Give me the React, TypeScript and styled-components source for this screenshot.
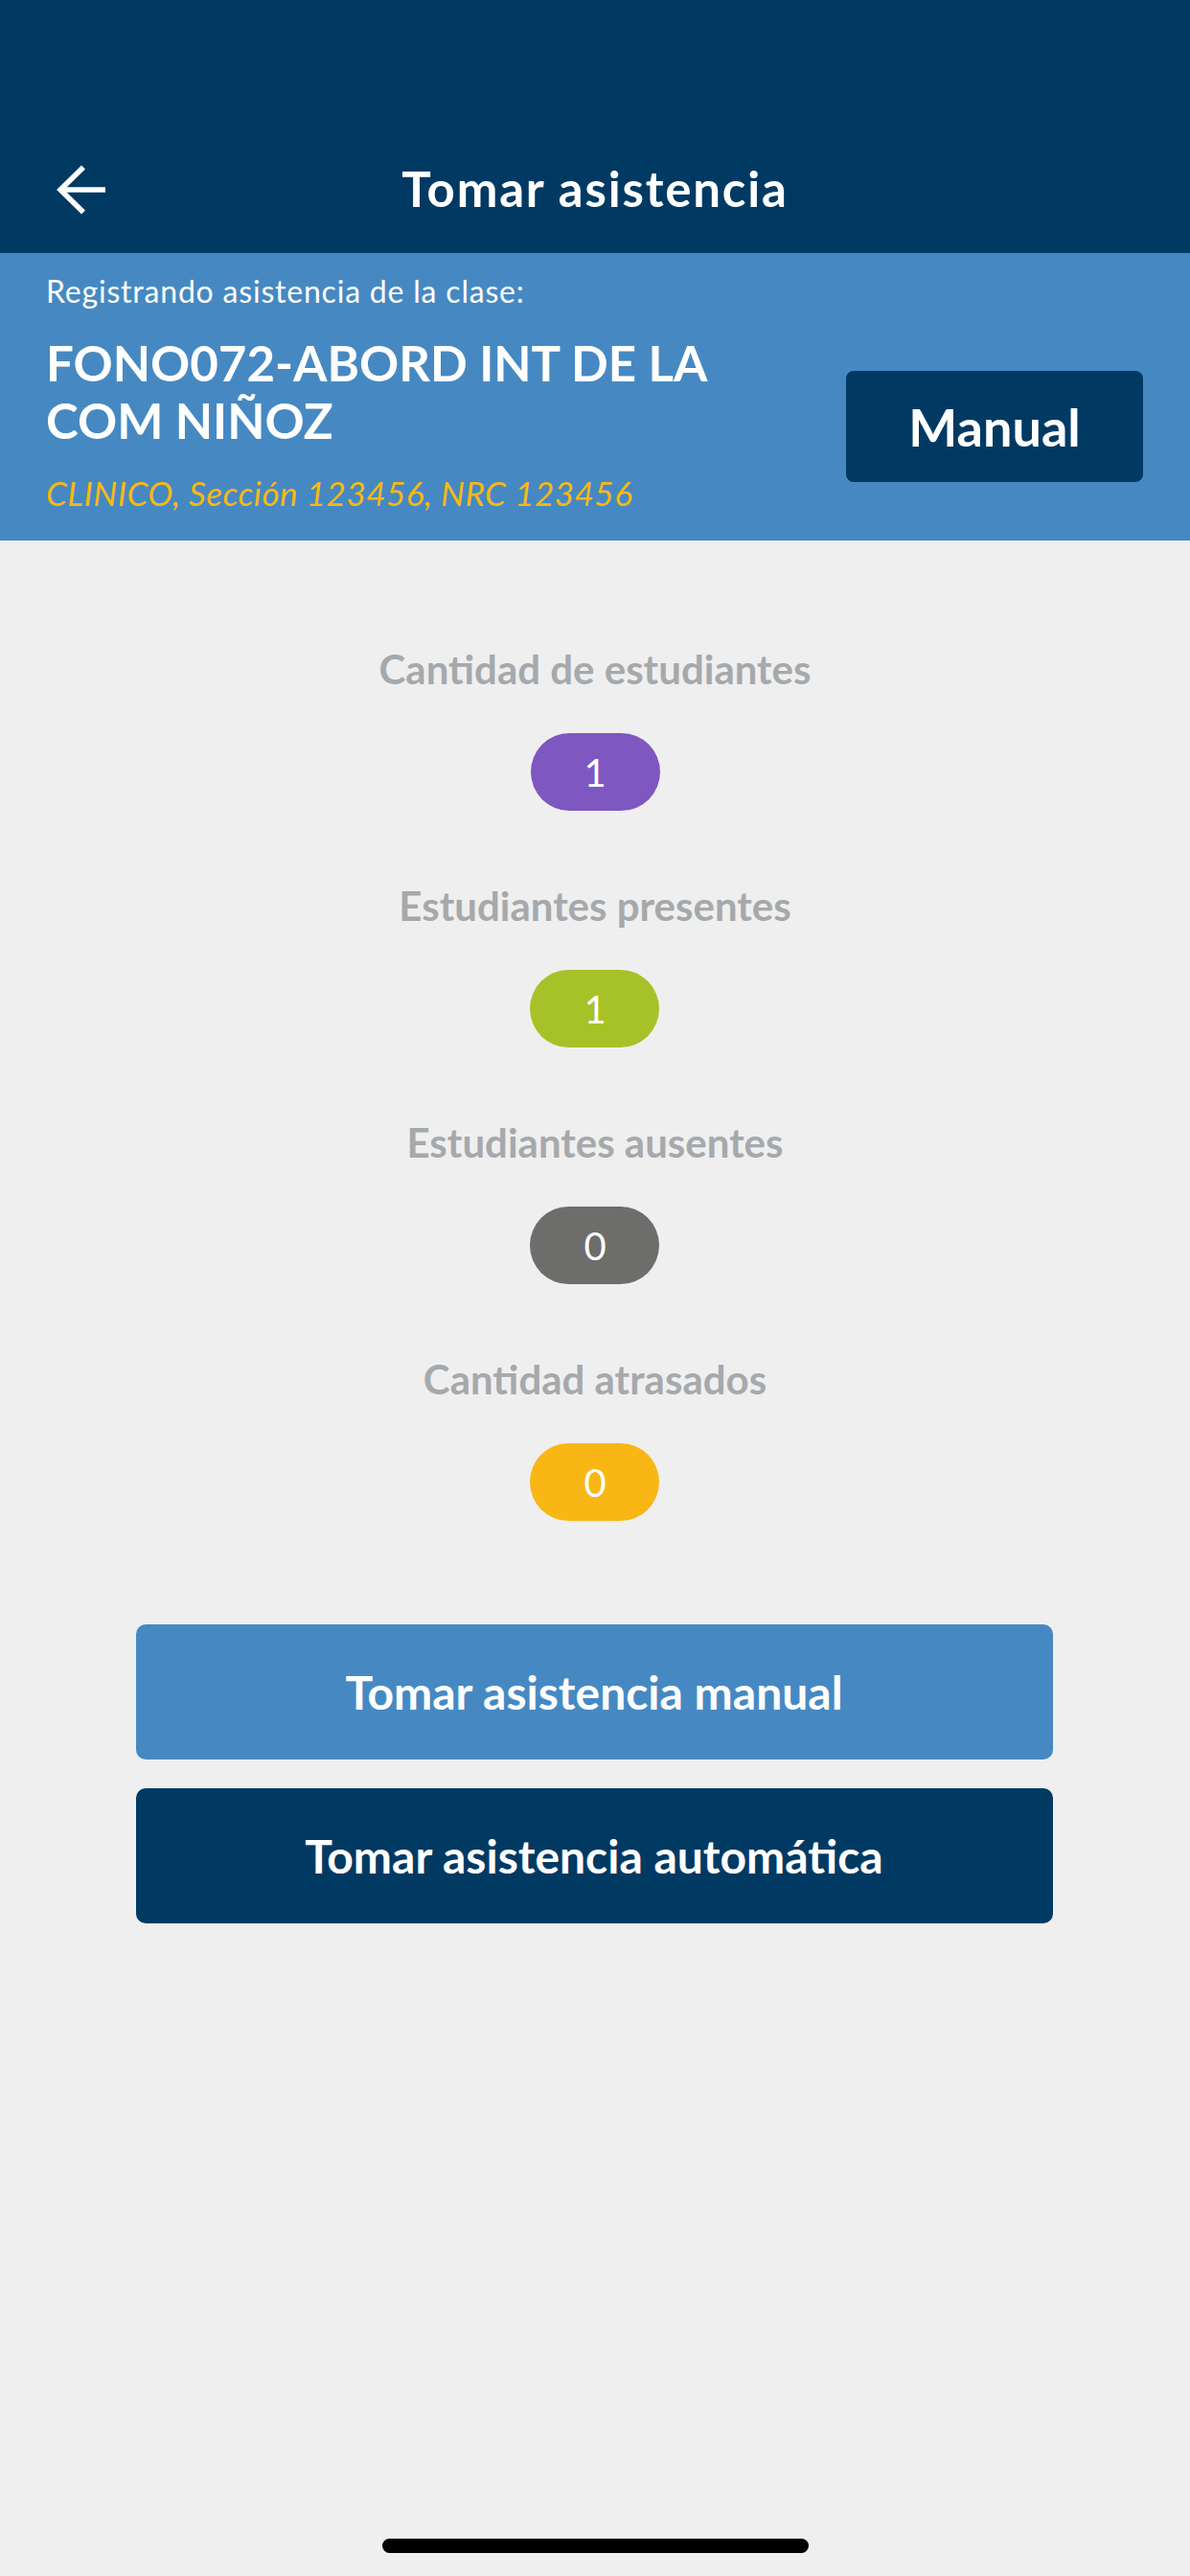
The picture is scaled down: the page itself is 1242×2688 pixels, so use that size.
import React from "react";
import styled, { createGlobalStyle } from "styled-components";

const NAVY = "#003a63";
const BLUE = "#4689c2";

const GlobalStyle = createGlobalStyle`
  html, body {
    margin: 0;
    padding: 0;
    background: #efefef;
  }
  * {
    box-sizing: border-box;
  }
  body {
    font-family: Lato, "Open Sans", sans-serif;
  }
`;

interface Stat {
  label: string;
  value: number;
  color: string;
}

const stats: Stat[] = [
  { label: "Cantidad de estudiantes", value: 1, color: "#7e57c1" },
  { label: "Estudiantes presentes", value: 1, color: "#a7c228" },
  { label: "Estudiantes ausentes", value: 0, color: "#6d6d6b" },
  { label: "Cantidad atrasados", value: 0, color: "#f8b714" },
];

const BackArrow: React.FC = () => (
  <svg width="54" height="54" viewBox="0 0 54 54" fill="none">
    <path d="M52 27H5" stroke="#fff" strokeWidth="5.5" />
    <path d="M29 3.5L5 27l24 23.5" stroke="#fff" strokeWidth="5.5" strokeLinejoin="miter" />
  </svg>
);

export default function App() {
  return (
    <Screen>
      <GlobalStyle />
      <TopBar>
        <NavRow>
          <BackButton>
            <BackArrow />
          </BackButton>
          <NavTitle>Tomar asistencia</NavTitle>
          <span />
        </NavRow>
      </TopBar>

      <ClassBanner>
        <BannerCaption>Registrando asistencia de la clase:</BannerCaption>
        <BannerRow>
          <BannerInfo>
            <CourseName>FONO072-ABORD INT DE LA COM NIÑOZ</CourseName>
            <CourseMeta>CLINICO, Sección 123456, NRC 123456</CourseMeta>
          </BannerInfo>
          <ModeButton>Manual</ModeButton>
        </BannerRow>
      </ClassBanner>

      <StatsList>
        {stats.map((s) => (
          <StatItem key={s.label}>
            <StatLabel>{s.label}</StatLabel>
            <StatBadge $color={s.color}>{s.value}</StatBadge>
          </StatItem>
        ))}
      </StatsList>

      <Actions>
        <ActionButton $color={BLUE}>Tomar asistencia manual</ActionButton>
        <ActionButton $color={NAVY}>Tomar asistencia automática</ActionButton>
      </Actions>

      <Spacer />
      <HomeIndicator />
    </Screen>
  );
}

const Screen = styled.div`
  width: 1242px;
  height: 2688px;
  display: flex;
  flex-direction: column;
  background: #efefef;
  overflow: hidden;
`;

const TopBar = styled.header`
  background: ${NAVY};
  padding-top: 132px;
  height: 264px;
`;

const NavRow = styled.div`
  height: 132px;
  display: grid;
  grid-template-columns: 200px 1fr 200px;
  align-items: center;
`;

const BackButton = styled.button`
  background: none;
  border: none;
  padding: 0 0 0 58px;
  display: flex;
  align-items: center;
  height: 100%;
  cursor: pointer;
`;

const NavTitle = styled.h1`
  margin: 0;
  text-align: center;
  color: #fff;
  font-size: 51px;
  font-weight: 700;
  line-height: 60px;
  letter-spacing: 1.8px;
  padding-bottom: 3px;
`;

const ClassBanner = styled.section`
  background: ${BLUE};
  height: 300px;
  padding: 21px 49px 0 48px;
  color: #fff;
`;

const BannerCaption = styled.div`
  font-size: 32px;
  line-height: 37px;
  font-weight: 400;
  letter-spacing: 0.8px;
`;

const BannerRow = styled.div`
  display: flex;
  align-items: center;
  justify-content: space-between;
  margin-top: 27px;
`;

const BannerInfo = styled.div`
  display: flex;
  flex-direction: column;
  gap: 25px;
  max-width: 780px;
`;

const CourseName = styled.div`
  font-size: 51px;
  line-height: 60px;
  font-weight: 700;
  width: 730px;
`;

const CourseMeta = styled.div`
  font-size: 35px;
  line-height: 41px;
  font-style: italic;
  letter-spacing: 0.5px;
  color: #f7b814;
`;

const ModeButton = styled.button`
  width: 310px;
  height: 116px;
  margin-top: 6px;
  border: none;
  border-radius: 8px;
  background: ${NAVY};
  color: #fff;
  font-family: Lato, sans-serif;
  font-size: 54px;
  font-weight: 700;
  cursor: pointer;
`;

const StatsList = styled.div`
  display: flex;
  flex-direction: column;
  align-items: center;
  gap: 75px;
  padding-top: 110px;
`;

const StatItem = styled.div`
  display: flex;
  flex-direction: column;
  align-items: center;
  gap: 43px;
`;

const StatLabel = styled.div`
  font-size: 42px;
  line-height: 48px;
  font-weight: 700;
  color: #a6a9ac;
`;

const StatBadge = styled.div<{ $color: string }>`
  width: 135px;
  height: 81px;
  border-radius: 41px;
  background: ${(p) => p.$color};
  color: #fff;
  font-size: 40px;
  display: flex;
  align-items: center;
  justify-content: center;
`;

const Actions = styled.div`
  display: flex;
  flex-direction: column;
  gap: 30px;
  width: 957px;
  margin: 108px auto 0;
  transform: translateX(-1px);
`;

const ActionButton = styled.button<{ $color: string }>`
  height: 141px;
  border: none;
  border-radius: 10px;
  background: ${(p) => p.$color};
  color: #fff;
  font-family: Lato, sans-serif;
  font-size: 48px;
  font-weight: 700;
  cursor: pointer;
`;

const Spacer = styled.div`
  flex: 1;
`;

const HomeIndicator = styled.div`
  align-self: center;
  width: 445px;
  height: 15px;
  border-radius: 8px;
  background: #000;
  margin-bottom: 24px;
`;
